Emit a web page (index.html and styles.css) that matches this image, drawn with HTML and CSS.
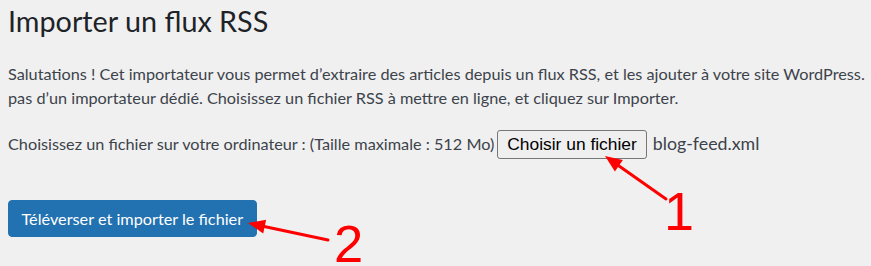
FILE: index.html
```html
<!DOCTYPE html>
<html lang="fr">
<head>
<meta charset="utf-8">
<title>Importer un flux RSS</title>
<link rel="stylesheet" href="styles.css">
</head>
<body>
<div class="wrap">
  <h1 class="title">Importer un flux RSS</h1>
  <p class="intro">Salutations ! Cet importateur vous permet d’extraire des articles depuis un flux RSS, et les ajouter à votre site WordPress.<br>pas d’un importateur dédié. Choisissez un fichier RSS à mettre en ligne, et cliquez sur Importer.</p>
  <div class="upload-row">
    <span class="upload-label">Choisissez un fichier sur votre ordinateur : (Taille maximale : 512 Mo)</span>
    <button class="file-btn" type="button">Choisir un fichier</button>
    <span class="file-name">blog-feed.xml</span>
  </div>
  <button class="submit-btn" type="button">Téléverser et importer le fichier</button>
</div>
<svg class="annotations" width="871" height="266" viewBox="0 0 871 266" aria-hidden="true">
  <line x1="666" y1="199" x2="618" y2="165.3" stroke="#ff0000" stroke-width="3" stroke-linecap="round"/>
  <polygon points="605,156 622.9,160.1 614.9,171.5" fill="#ff0000"/>
  <line x1="328" y1="240" x2="263" y2="226.2" stroke="#ff0000" stroke-width="3" stroke-linecap="round"/>
  <polygon points="248,223 266.1,219.7 263.2,233.4" fill="#ff0000"/>
  <text class="num" x="664" y="230">1</text>
  <text class="num num-two" x="334" y="262">2</text>
</svg>
</body>
</html>
```
FILE: styles.css
```css
html, body {
  margin: 0;
  padding: 0;
  background: #f0f0f1;
}
body {
  position: relative;
  width: 871px;
  height: 266px;
  overflow: hidden;
  font-family: "Lato", "Noto Sans", sans-serif;
  color: #3c434a;
}
.wrap {
  padding: 3px 8px 0;
}
.title {
  margin: 0;
  font-size: 28.75px;
  line-height: 37px;
  font-weight: 400;
  color: #1d2327;
}
.intro {
  margin: 22px 0 0;
  font-size: 16.25px;
  line-height: 24.375px;
  white-space: nowrap;
}
.upload-row {
  display: flex;
  align-items: baseline;
  margin-top: 19.25px;
  font-size: 16.25px;
  line-height: 24.375px;
  white-space: nowrap;
}
.file-btn {
  box-sizing: border-box;
  height: 29px;
  margin: 0 0 0 3px;
  padding: 0 9px;
  border: 1px solid #767676;
  border-radius: 3px;
  background: #efefef;
  color: #000;
  font-family: "Liberation Sans", Arial, sans-serif;
  font-size: 17.4px;
  line-height: normal;
}
.file-name {
  margin-left: 6px;
  font-size: 17.8px;
  color: #3c434a;
}
.submit-btn {
  display: block;
  box-sizing: border-box;
  height: 37px;
  margin: 41px 0 0;
  padding: 0 12.5px;
  border: 1px solid #2271b1;
  border-radius: 4px;
  background: #2271b1;
  color: #fff;
  font-family: "Lato", "Noto Sans", sans-serif;
  font-size: 16.25px;
  line-height: 20px;
}
.annotations {
  position: absolute;
  left: 0;
  top: 0;
  pointer-events: none;
}
.num {
  fill: #ff0000;
  font-family: "Liberation Sans", Arial, sans-serif;
  font-size: 54px;
}
.num-two {
  font-size: 52.5px;
}
```
